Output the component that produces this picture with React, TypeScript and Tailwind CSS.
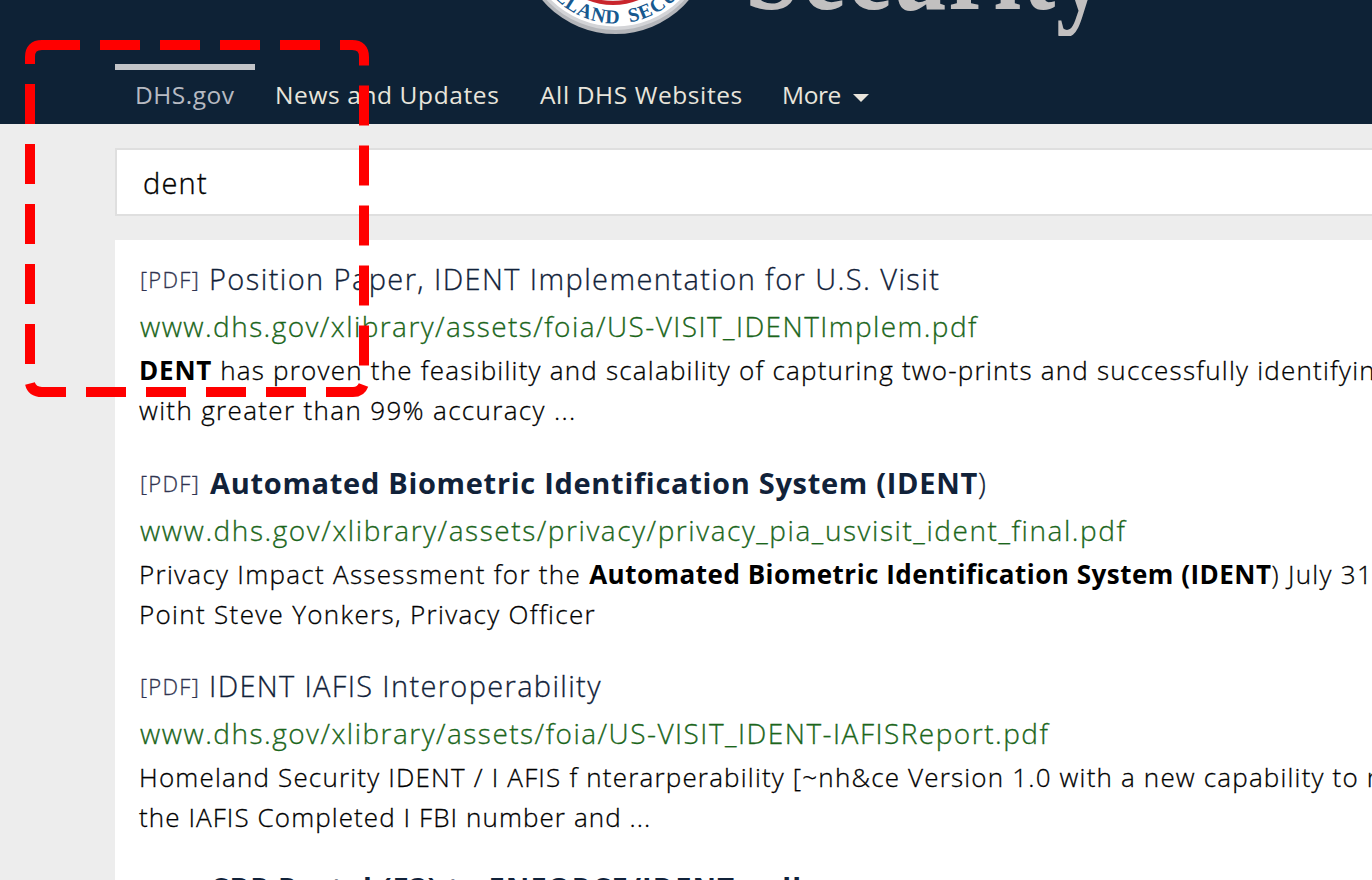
import type { ReactNode } from 'react';

const NAV = 'text-[24.5px] leading-[50px] font-normal whitespace-nowrap';

function Seal() {
  return (
    <svg className="h-[35px] w-[200px] shrink-0" viewBox="515 0 200 35">
      <defs>
        <path id="sealText" d="M 530 -62 A 85.500 85.500 0 0 0 701 -62" />
      </defs>
      <circle cx="615.5" cy="-62" r="96" fill="#b4b6ba" />
      <circle cx="615.5" cy="-64" r="94" fill="#d3d4d7" />
      <circle cx="615.5" cy="-65" r="91.500" fill="#ffffff" />
      <circle cx="613" cy="-64" r="69" fill="#c9252c" />
      <circle cx="613" cy="-65.500" r="66.500" fill="#e9d9da" />
      <text fontFamily="Liberation Serif" fontWeight="700" fontSize="20" fill="#17598f" textAnchor="middle" letterSpacing="0.8" wordSpacing="4">
        <textPath href="#sealText" startOffset="50.3%">
          ELAND SECU
        </textPath>
      </text>
    </svg>
  );
}

function Result({ title, url, children }: { title: ReactNode; url: ReactNode; children: ReactNode }) {
  return (
    <article className="mb-[28.5px] whitespace-nowrap">
      <h2 className="flex h-12 items-start text-[29px] leading-[48px] text-[#112239]">
        <span className="w-[70px] pl-px text-[22px] leading-[49px] tracking-[1.3px] text-[#303450]">[PDF]</span>
        {title}
      </h2>
      <div className="h-[47px] pl-px text-[28px] leading-[47px] text-[#1b661b]">{url}</div>
      <div className="text-[26px] leading-10 text-black">{children}</div>
    </article>
  );
}

export default function App() {
  return (
    <div className="relative flex h-[880px] w-[1372px] flex-col overflow-hidden bg-[#ededed] font-['Open_Sans',sans-serif] font-light">
      <header className="flex h-[124px] shrink-0 flex-col bg-[#0e2236] pl-[115px]">
        <div className="flex h-16 items-start pl-[400px]">
          <Seal />
          <div className="h-9 overflow-hidden pr-4 pl-[30px]">
            <div className="mt-[-74px] origin-[50%_84%] scale-y-[1.3] font-['Liberation_Serif',serif] text-[100px] leading-[100px] font-bold tracking-[0.8px] text-[#c2c0c0]">
              Security
            </div>
          </div>
        </div>
        <nav className="flex text-[#e8e5dc]">
          <a className={`w-[140px] border-t-[6px] border-[#c2c4c8] pl-5 text-[#b7bac2] tracking-[0.5px] ${NAV}`}>DHS.gov</a>
          <a className={`w-[264px] pt-[6px] pl-5 tracking-[0.6px] ${NAV}`}>News and Updates</a>
          <a className={`w-[243px] pt-[6px] pl-[21px] tracking-[0.6px] ${NAV}`}>All DHS Websites</a>
          <a className={`flex items-center gap-3 pt-[6px] pl-5 tracking-[-0.4px] ${NAV}`}>
            More
            <svg className="mt-[6px] h-2 w-4" viewBox="0 0 16 8">
              <path d="M0 0H16L8 8Z" fill="#e8e5dc" />
            </svg>
          </a>
        </nav>
      </header>

      <div className="mt-6 ml-[115px] h-[68px] shrink-0 border-2 border-r-0 border-[#dfdfdf] bg-white pl-[26px] text-[29px] leading-[66px] tracking-[1.2px] text-black [-webkit-text-stroke:0.35px]">
        dent
      </div>

      <main className="mt-6 ml-[115px] h-[640px] shrink-0 bg-white pt-[15px] pl-6 [-webkit-text-stroke:0.3px]">
        <Result
          title={<span className="tracking-[1.4px]">Position Paper, IDENT Implementation for U.S. Visit</span>}
          url={<span className="tracking-[1.43px]">www.dhs.gov/xlibrary/assets/foia/US-VISIT_IDENTImplem.pdf</span>}
        >
          <div className="tracking-[1.22px]">
            <b className="font-bold tracking-[0.8px] [-webkit-text-stroke:0]">DENT</b> has proven the feasibility and scalability of capturing two-prints and successfully identifying
          </div>
          <div className="tracking-[1.35px]">with greater than 99% accuracy ...</div>
        </Result>
        <Result
          title={
            <span className="pl-px tracking-[0.7px]">
              <b className="font-bold [-webkit-text-stroke:0]">Automated Biometric Identification System (IDENT</b>)
            </span>
          }
          url={<span className="tracking-[1.56px]">www.dhs.gov/xlibrary/assets/privacy/privacy_pia_usvisit_ident_final.pdf</span>}
        >
          <div className="tracking-[1.3px]">
            Privacy Impact Assessment for the{' '}
            <b className="font-bold tracking-[0.5px] [-webkit-text-stroke:0]">Automated Biometric Identification System (IDENT</b>) July 31, 2006
          </div>
          <div className="tracking-[1.33px]">Point Steve Yonkers, Privacy Officer</div>
        </Result>
        <Result
          title={<span className="tracking-[1.33px]">IDENT IAFIS Interoperability</span>}
          url={<span className="tracking-[1.48px]">www.dhs.gov/xlibrary/assets/foia/US-VISIT_IDENT-IAFISReport.pdf</span>}
        >
          <div className="tracking-[1.18px]">Homeland Security IDENT / I AFIS f nterarperability [~nh&amp;ce Version 1.0 with a new capability to reach</div>
          <div className="tracking-[1.08px]">the IAFIS Completed I FBI number and ...</div>
        </Result>
        <div className="-mt-0.5">
          <Result title={<b className="pl-px font-bold tracking-[1.1px] [-webkit-text-stroke:0]">CBP Portal (E3) to ENFORCE/IDENT poll</b>} url="">
            {null}
          </Result>
        </div>
      </main>

      <svg className="pointer-events-none absolute top-10 left-[25px] h-[358px] w-[345px]" viewBox="25 40 345 358" fill="none" stroke="#ff0000" strokeWidth="10">
        <path d="M30 64V57Q30 45 42 45H80M100 45h40M160 45h40M220 45h40M280 45h40M340 45H352Q364 45 364 57V65.500" />
        <path d="M364 85.500v40M364 145.500v40M364 205.500v40M364 265.500v40M364 325.500v40" />
        <path d="M30 84v40M30 144v40M30 204v40M30 264v40M30 324v40" />
        <path d="M30 383.500Q32 392 42 392H66M86 392h40M146 392h40M206 392h40M266 392h40M326 392H353Q361 392 363.500 385" />
      </svg>
    </div>
  );
}
